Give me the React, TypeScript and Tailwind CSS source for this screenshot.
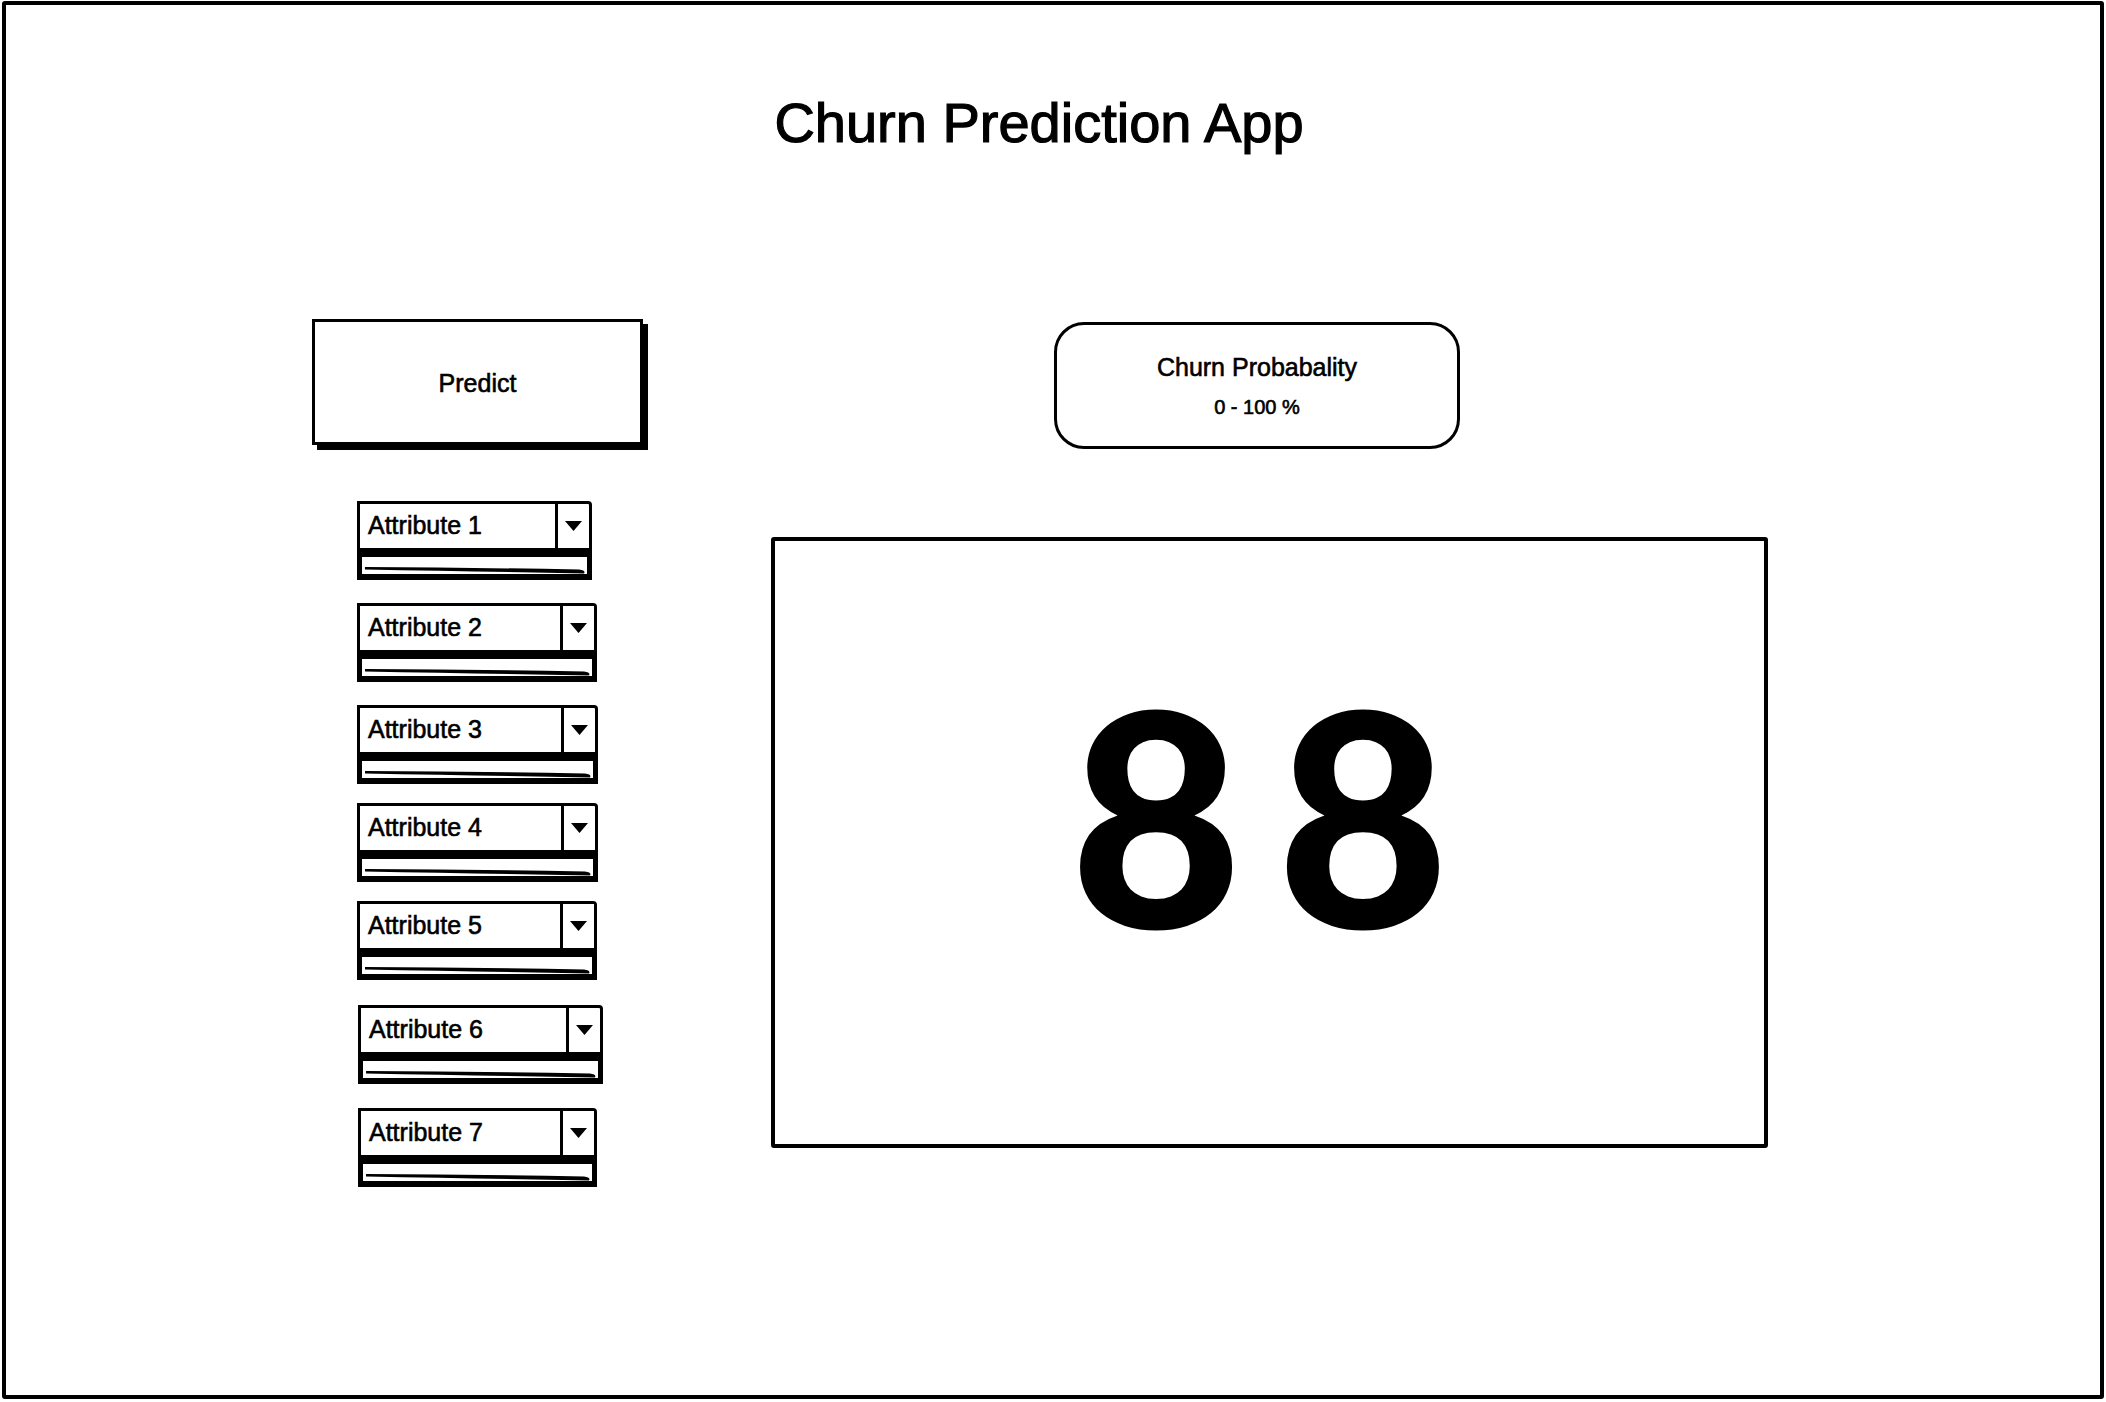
import React from "react";

const attributes = [
  { label: "Attribute 1", box: "mt-[56px] ml-[45px] w-[235px]" },
  { label: "Attribute 2", box: "mt-[23px] ml-[45px] w-[240px]" },
  { label: "Attribute 3", box: "mt-[23px] ml-[45px] w-[241px]" },
  { label: "Attribute 4", box: "mt-[19px] ml-[45px] w-[241px]" },
  { label: "Attribute 5", box: "mt-[19px] ml-[45px] w-[240px]" },
  { label: "Attribute 6", box: "mt-[25px] ml-[46px] w-[245px]" },
  { label: "Attribute 7", box: "mt-[24px] ml-[46px] w-[239px]" },
];

function AttributeSelect({ label, box }: { label: string; box: string }) {
  return (
    <div className={`flex flex-col ${box}`}>
      {/* dropdown */}
      <div className="flex h-[47px] border-[3px] border-b-0 border-black rounded-tr-[4px]">
        <div className="flex flex-1 items-center pl-[8px] text-[25px] text-black [-webkit-text-stroke:0.6px_#000]">
          {label}
        </div>
        <div className="flex w-[34px] items-center justify-center border-l-[3px] border-black">
          <svg width="17" height="10" viewBox="0 0 17 10">
            <path d="M0 0 H17 L8.5 10 Z" fill="#000" />
          </svg>
        </div>
      </div>
      {/* slider bar */}
      <div className="h-[32px] border-black border-t-[9px] border-b-[6px] border-x-[5px] bg-white">
        <svg className="block h-full w-full" viewBox="0 0 230 17" preserveAspectRatio="none">
          <path d="M3 10 Q110 10.5 222 12.5 Q229 13.5 227 16.5 Q120 14.5 3 12.4 Z" fill="#000" />
        </svg>
      </div>
    </div>
  );
}

export default function App() {
  return (
    <div className="w-[2106px] h-[1402px] bg-white px-[2px] pt-[1px] pb-[3px] font-['Liberation_Sans',sans-serif] text-black">
      <div className="flex h-full flex-col border-4 border-black rounded-[3px]">
        <h1 className="mt-[90px] pr-[28px] text-center text-[56px] leading-none [-webkit-text-stroke:1.2px_#000]">
          Churn Prediction App
        </h1>

        <div className="mt-[168px] flex pl-[306px]">
          {/* inputs */}
          <div className="flex w-[459px] flex-col">
            <button className="flex h-[126px] w-[331px] items-center justify-center border-[3px] border-black bg-white pt-[4px] text-[25px] shadow-[5px_5px_0_0_#000] [-webkit-text-stroke:0.6px_#000]">
              Predict
            </button>
            {attributes.map((a) => (
              <AttributeSelect key={a.label} label={a.label} box={a.box} />
            ))}
          </div>

          {/* result */}
          <div className="flex flex-col">
            <div className="ml-[283px] mt-[3px] flex h-[127px] w-[406px] flex-col items-center justify-center rounded-[30px] border-[3px] border-black [-webkit-text-stroke:0.6px_#000]">
              <div className="text-[25px] leading-[30px]">Churn Probabality</div>
              <div className="mt-[13px] text-[20px] leading-[24px]">0 - 100 %</div>
            </div>
            <div className="mt-[88px] flex h-[611px] w-[997px] items-center justify-center rounded-[3px] border-4 border-black pb-[60px]">
              <span className="pl-[14px] font-['Lato',sans-serif] text-[298px] font-black leading-none tracking-[34px]">
                88
              </span>
            </div>
          </div>
        </div>
      </div>
    </div>
  );
}
